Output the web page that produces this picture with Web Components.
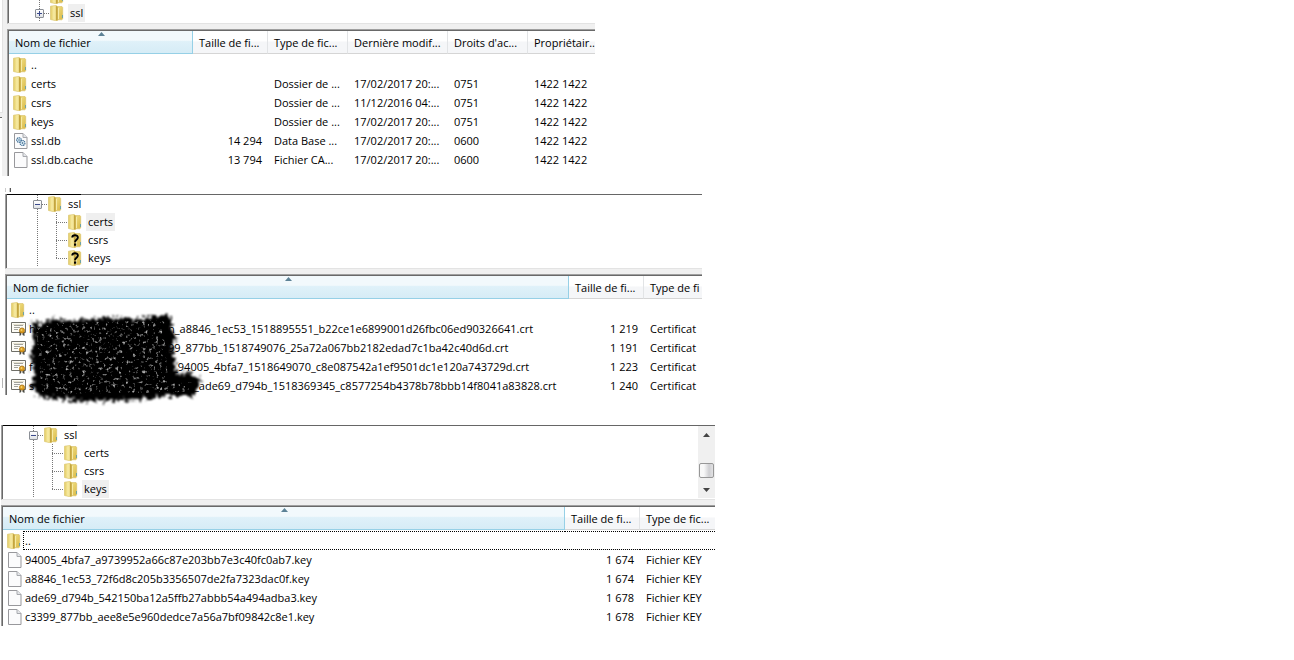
<!DOCTYPE html>
<html lang="fr">
<head>
<meta charset="utf-8">
<title>Répertoire ssl</title>
<style>
  body { margin: 0; background: #fff; color: #000; font: 11px/16px "Open Sans", "Noto Sans", sans-serif; }
  main { display: grid; grid-template-columns: 595fr 107fr 13fr 579fr; }
  .root { grid-column: 1 / 2; }
  .certs { grid-column: 1 / 3; margin-top: 12px; }
  .keys { grid-column: 1 / 4; margin-top: 34px; }
</style>
</head>
<body>
<main>
  <file-pane class="root" data-pane="root"></file-pane>
  <file-pane class="certs" data-pane="certs"></file-pane>
  <file-pane class="keys" data-pane="keys"></file-pane>
</main>

<script>
const folder = `
  <defs>
    <linearGradient id="a" x2="1" y2="0"><stop offset="0" stop-color="#e2ca62"/><stop offset=".5" stop-color="#f8eca4"/><stop offset="1" stop-color="#dcc465"/></linearGradient>
    <linearGradient id="b" x2="1" y2="1"><stop offset="0" stop-color="#f3e48c"/><stop offset="1" stop-color="#d9b845"/></linearGradient>
  </defs>
  <path d="M6 1.500h6l.7 1V14l-1 .8H7z" fill="url(#b)" stroke="#d8c067" stroke-width=".6"/>
  <path d="M.5 1.200 6 .4l1.600 1.400v13.600L6 15.800.5 14.500z" fill="url(#a)" stroke="#d9c266" stroke-width=".6"/>
  <path d="M6 .8v14.800l1.600-.6V2z" fill="#c4a53f"/>
  <path d="M8.500 3v11" stroke="#f7eba6" stroke-width="1"/>
  <path d="M12.500 10v3" stroke="#6fa3a5" stroke-width="1"/>`;
const sheet = `
  <path d="M1.500 .5h8.500l4 4v11h-12.500z" fill="#fbfbfc" stroke="#98989c"/>
  <path d="M10 .5v4h4" fill="#e4e6ea" stroke="#a7a9ae"/>`;
const ICONS = {
  folder,
  unknown: folder + `<path d="M4.300 5.400C4.300 2.500 9.800 2.300 9.800 5.500c0 2.300-2.700 2.200-2.700 4.700" fill="none" stroke="#000" stroke-width="2"/><path d="M6 11.500h2.200v2.200H6z"/>`,
  file: sheet,
  db: sheet + `<g fill="#dcebf5" stroke="#3c6c94" stroke-width="1.100" stroke-dasharray="1.400 .5"><circle cx="6" cy="7" r="2.300"/><circle cx="9.500" cy="10" r="2.500"/></g><g fill="#28597f"><circle cx="6" cy="7" r=".7"/><circle cx="9.500" cy="10" r=".8"/></g>`,
  cert: `
  <path d="M.5 1.500h14v10H.5z" fill="#fdfcf6" stroke="#6f6f68"/>
  <path d="M2 3.500h11" stroke="#e6e2cf"/>
  <path d="M3 4.500h9M3 6.500h6M3 8.500h4" stroke="#a3a39c"/>
  <path d="M8.500 10.500v4.500l1.700-1V11zM11.500 11v3l2 1v-4.500z" fill="#4c4c44"/>
  <circle cx="11" cy="9.500" r="2.600" fill="#dc9e22" stroke="#a36c10" stroke-width=".7"/><circle cx="10.500" cy="9" r=".9" fill="#f7d26b"/>`
};

class FileIcon extends HTMLElement {
  connectedCallback() {
    this.attachShadow({ mode: 'open' }).innerHTML = `
      <style>:host { display: block; flex: none; width: 16px; height: 16px; } svg { display: block; }</style>
      <svg width="16" height="16" viewBox="0 0 16 16" aria-hidden="true">${ICONS[this.getAttribute('name')]}</svg>`;
  }
}
customElements.define('file-icon', FileIcon);

/* One line of the folder tree */
class TreeRow extends HTMLElement {
  connectedCallback() {
    const child = this.hasAttribute('child');
    const last = this.hasAttribute('last');
    const open = this.hasAttribute('open');
    this.attachShadow({ mode: 'open' }).innerHTML = `
      <style>
        :host { display: flex; height: 18px; align-items: center; padding-left: 26px; }
        .guide { flex: none; width: 9px; height: 18px; display: grid; place-items: center;
          background: repeating-linear-gradient(#777 0 1px, transparent 1px 2px) 4px 0 / 1px 100% no-repeat; }
        button { box-sizing: border-box; width: 9px; height: 9px; padding: 0; border: 1px solid #8b8f96; border-radius: 1px;
          background: linear-gradient(#fff, #dfe2e6); display: block; }
        button svg { display: block; }
        .dash { flex: none; height: 1px; width: 6px; background: repeating-linear-gradient(90deg, #777 0 1px, transparent 1px 2px); }
        .elbow { flex: none; width: 12px; height: 18px; margin-left: 14px;
          background:
            repeating-linear-gradient(#777 0 1px, transparent 1px 2px) 0 0 / 1px ${last ? '10px' : '100%'} no-repeat,
            repeating-linear-gradient(90deg, #777 0 1px, transparent 1px 2px) 0 9px / 12px 1px no-repeat; }
        .label { margin-left: 2px; padding: 0 2px; line-height: 18px; }
        :host([selected]) .label { background: #efefef; }
        ::slotted(*) { color: inherit; text-decoration: none; }
      </style>
      <span class="guide">${child ? '' : `<button aria-label="${open ? 'Réduire' : 'Développer'}"><svg width="7" height="7" viewBox="0 0 7 7"><path d="M1 3.500h5${open ? '' : 'M3.500 1v5'}" stroke="#3b4a8c"/></svg></button>`}</span>
      ${child ? '<span class="elbow"></span>' : '<span class="dash"></span>'}
      <file-icon name="${this.getAttribute('icon') || 'folder'}"></file-icon>
      <span class="label"><slot></slot></span>`;
  }
}
customElements.define('tree-row', TreeRow);

class TreeScroll extends HTMLElement {
  connectedCallback() {
    this.attachShadow({ mode: 'open' }).innerHTML = `
      <style>
        :host { display: flex; flex-direction: column; align-items: center; width: 17px; background: #f0f0f0; }
        button { width: 17px; height: 17px; padding: 0; border: 0; background: none; display: grid; place-items: center; }
        .space { flex: 1; }
        .thumb { box-sizing: border-box; width: 15px; height: 15px; margin-bottom: 3px; border: 1px solid #979797; border-radius: 2px;
          background: linear-gradient(90deg, #f8f8f8 30%, #cfcfd2 70%, #e2e2e4); }
      </style>
      <button aria-label="Monter"><svg width="7" height="4" viewBox="0 0 7 4"><path d="M0 4 3.500 0 7 4z" fill="#444"/></svg></button>
      <span class="space"></span><span class="thumb"></span>
      <button aria-label="Descendre"><svg width="7" height="4" viewBox="0 0 7 4"><path d="M0 0h7L3.500 4z" fill="#444"/></svg></button>`;
  }
}
customElements.define('tree-scroll', TreeScroll);

/* Black brush strokes laid over the start of the certificate names */
class BrushMask extends HTMLElement {
  connectedCallback() {
    this.attachShadow({ mode: 'open' }).innerHTML = `
      <style>:host { display: block; pointer-events: none; } svg { display: block; overflow: visible; }</style>
      <svg width="180" height="92" viewBox="0 0 180 92" aria-hidden="true">
        <defs>
          <filter id="rough" x="-5%" y="-8%" width="110%" height="116%">
            <feTurbulence type="fractalNoise" baseFrequency=".3" numOctaves="2" seed="7" result="n"/>
            <feDisplacementMap in="SourceGraphic" in2="n" scale="13" xChannelSelector="R" yChannelSelector="G"/>
            <feGaussianBlur stdDeviation=".9"/>
          </filter>
          <filter id="specks" x="0" y="0" width="100%" height="100%">
            <feTurbulence type="fractalNoise" baseFrequency=".3" numOctaves="2" seed="12"/>
            <feColorMatrix values="0 0 0 0 .4  0 0 0 0 .4  0 0 0 0 .4  4 0 0 0 -2.300" result="s"/>
            <feComposite in="s" in2="SourceGraphic" operator="in"/>
            <feGaussianBlur stdDeviation=".5"/>
          </filter>
        </defs>
        <path filter="url(#rough)" d="M5 6 14 11 22 5 50 7 80 3 110 5 130 2 145 2 145 16 150 24 146 34 149 46 150 60 160 58 175 65 168 82 140 82 125 85 90 86 60 88 35 85 14 83 10 76 5 74 8 60 5 40 8 26z"/>
        <path filter="url(#specks)" d="M10 10 138 6 142 70 166 68 162 78 16 80z"/>
      </svg>`;
  }
}
customElements.define('brush-mask', BrushMask);

const PANES = {
  root: {
    tree: '<div class="cut"><file-icon name="folder"></file-icon></div><tree-row selected><a href="#ssl">ssl</a></tree-row>',
    cols: [['Nom de fichier'], ['Taille de fi...', 75], ['Type de fic...', 80], ['Dernière modif...', 100], ["Droits d'ac...", 80], ['Propriétair..', 67]],
    rows: [
      ['folder', '..', '', '', '', '', ''],
      ['folder', 'certs', '', 'Dossier de ...', '17/02/2017 20:...', '0751', '1422 1422'],
      ['folder', 'csrs', '', 'Dossier de ...', '11/12/2016 04:...', '0751', '1422 1422'],
      ['folder', 'keys', '', 'Dossier de ...', '17/02/2017 20:...', '0751', '1422 1422'],
      ['db', 'ssl.db', '14 294', 'Data Base ...', '17/02/2017 20:...', '0600', '1422 1422'],
      ['file', 'ssl.db.cache', '13 794', 'Fichier CA...', '17/02/2017 20:...', '0600', '1422 1422']
    ]
  },
  certs: {
    tree: '<tree-row open><a href="#ssl">ssl</a></tree-row><tree-row child selected><a href="#certs">certs</a></tree-row><tree-row child icon="unknown"><a href="#csrs">csrs</a></tree-row><tree-row child last icon="unknown"><a href="#keys">keys</a></tree-row>',
    cols: [['Nom de fichier'], ['Taille de fi...', 75], ['Type de fi', 58]],
    rows: [
      ['folder', '..', '', ''],
      ['cert', '<i class="w1">h</i>n_a8846_1ec53_1518895551_b22ce1e6899001d26fbc06ed90326641.crt', '1 219', 'Certificat'],
      ['cert', '<i class="w1"></i>99_877bb_1518749076_25a72a067bb2182edad7c1ba42c40d6d.crt', '1 191', 'Certificat'],
      ['cert', '<i class="w2">f</i>_94005_4bfa7_1518649070_c8e087542a1ef9501dc1e120a743729d.crt', '1 223', 'Certificat'],
      ['cert', '<i class="w3">s</i>_ade69_d794b_1518369345_c8577254b4378b78bbb14f8041a83828.crt', '1 240', 'Certificat']
    ]
  },
  keys: {
    tree: '<tree-row open><a href="#ssl">ssl</a></tree-row><tree-row child><a href="#certs">certs</a></tree-row><tree-row child><a href="#csrs">csrs</a></tree-row><tree-row child last selected><a href="#keys">keys</a></tree-row>',
    cols: [['Nom de fichier'], ['Taille de fi...', 75], ['Type de fic...', 75]],
    rows: [
      ['folder', '..', '', ''],
      ['file', '94005_4bfa7_a9739952a66c87e203bb7e3c40fc0ab7.key', '1 674', 'Fichier KEY'],
      ['file', 'a8846_1ec53_72f6d8c205b3356507de2fa7323dac0f.key', '1 674', 'Fichier KEY'],
      ['file', 'ade69_d794b_542150ba12a5ffb27abbb54a494adba3.key', '1 678', 'Fichier KEY'],
      ['file', 'c3399_877bb_aee8e5e960dedce7a56a7bf09842c8e1.key', '1 678', 'Fichier KEY']
    ]
  }
};

/* Folder tree above, list of its files below */
class FilePane extends HTMLElement {
  connectedCallback() {
    const kind = this.dataset.pane;
    const p = PANES[kind];
    this.attachShadow({ mode: 'open' }).innerHTML = `
      <style>
        :host { display: flex; min-width: 0; position: relative; }
        .edge { flex: none; display: flex; flex-direction: column; }
        .edge.root { width: 7px; background: #f0f0f0; }
        .edge.root b { box-sizing: border-box; width: 3px; background: #fff; border-right: 1px solid #e3e3e3; }
        .edge.root b:first-child { height: 113px; border-bottom: 1px solid #e3e3e3; }
        .edge.root b:last-child { flex: 1; margin-top: 4px; width: 2px; border: 0; border-top: 1px solid #696969; }
        .edge.certs { width: 5px; justify-content: flex-end; }
        .edge.certs b { width: 1px; height: 10px; margin: 0 0 3px 2px; background: #b5b5b5; }
        .edge.keys { width: 1px; }
        .body { flex: 1; min-width: 0; }
        .scrap { height: 6px; background: linear-gradient(90deg, #ccc 0 1px, #fff 1px 4px, #ccc 4px 5px, #555 5px 6px, transparent 6px) 0 0 / 100% 4px no-repeat; }
        .view { border-left: 1px solid #a0a0a0; box-shadow: inset 1px 0 #696969; padding-left: 1px; }
        .tree { display: flex; border-bottom: 1px solid #e3e3e3; }
        .tree nav { flex: 1; }
        .tree.certs, .tree.keys { background: linear-gradient(90deg, #000 75px, #666 75px) 0 0 / 100% 1px no-repeat; padding-top: 1px; padding-bottom: 1px; }
        .tree.root { padding-bottom: 1px; }
        .cut { height: 4px; display: flex; align-items: flex-end; overflow: hidden; padding-left: 41px;
          background: repeating-linear-gradient(#777 0 1px, transparent 1px 2px) 30px 0 / 1px 100% no-repeat; }
        .split { height: 5px; background: #f0f0f0; }
        .list { border-top: 1px solid #a0a0a0; }
        table { border-top: 1px solid #696969; width: 100%; table-layout: fixed; border-collapse: separate; border-spacing: 0; }
        th, td { padding: 0; white-space: nowrap; overflow: hidden; font-weight: 400; text-align: left; }
        th { height: 23px; box-sizing: border-box; border-right: 1px solid #e2e4e6; border-bottom: 1px solid #d5d5d5;
          background: linear-gradient(#fff 45%, #f5f6f8 50%); position: relative; }
        th:first-child { border-color: #96d0e6; background: linear-gradient(#f2f9fc 42%, #dff1f9 48%, #d6ecf6); }
        th:last-child { border-right: 0; }
        th button { display: block; box-sizing: border-box; width: 100%; height: 22px; padding: 2px 0 0 6px; border: 0; background: none; font: inherit; color: inherit; text-align: left; }
        th svg { position: absolute; left: calc(50% - 3px); top: 1px; }
        tbody::before { content: ""; display: table-row; height: 1px; }
        td { height: 19px; padding-left: 6px; line-height: 19px; }
        td:nth-child(2) { text-align: right; padding: 0 6px 0 0; }
        td:first-child { padding-left: 4px; }
        .name { display: flex; align-items: center; gap: 2px; height: 19px; }
        .name span { display: flex; }
        i { font-style: normal; flex: none; }
        .w1 { width: 139px; } .w2 { width: 144px; } .w3 { width: 165px; }
        .list.root { padding-bottom: 7px; }
        .list.certs table { margin-bottom: -4px; }
        .list.keys .first td { box-sizing: border-box; border: 0 dotted #000; border-width: 1px 0; line-height: 17px; }
        .list.keys .first td:first-child { border: 0; }
        .list.keys .first .name { gap: 0; }
        .list.keys .first .name span { flex: 1; box-sizing: border-box; height: 19px; border: 1px dotted #000; border-right: 0; padding-left: 1px; line-height: 17px; }
        brush-mask { position: absolute; left: 26px; top: 126px; }
      </style>
      <div class="edge ${kind}">${kind === 'keys' ? '' : kind === 'certs' ? '<b></b>' : '<b></b><b></b>'}</div>
      <div class="body">
        ${kind === 'certs' ? '<div class="scrap"></div>' : ''}
        <div class="view tree ${kind}"><nav aria-label="Dossiers">${p.tree}</nav>${kind === 'keys' ? '<tree-scroll></tree-scroll>' : ''}</div>
        <div class="split"></div>
        <div class="view list ${kind}">
          <table>
            <colgroup>${p.cols.map(c => `<col${c[1] ? ` style="width:${c[1]}px"` : ''}>`).join('')}</colgroup>
            <thead><tr>${p.cols.map((c, i) => `<th scope="col"><button>${c[0]}</button>${i ? '' : '<svg width="7" height="4" viewBox="0 0 7 4" aria-hidden="true"><path d="M0 4 3.500 0 7 4z" fill="#5c8296"/></svg>'}</th>`).join('')}</tr></thead>
            <tbody>${p.rows.map((r, i) => `<tr class="${i ? '' : 'first'}"><td><div class="name"><file-icon name="${r[0]}"></file-icon><span>${r[1]}</span></div></td>${r.slice(2).map(t => `<td>${t}</td>`).join('')}</tr>`).join('')}</tbody>
          </table>
        </div>
      </div>
      ${kind === 'certs' ? '<brush-mask></brush-mask>' : ''}`;
  }
}
customElements.define('file-pane', FilePane);
</script>
</body>
</html>
